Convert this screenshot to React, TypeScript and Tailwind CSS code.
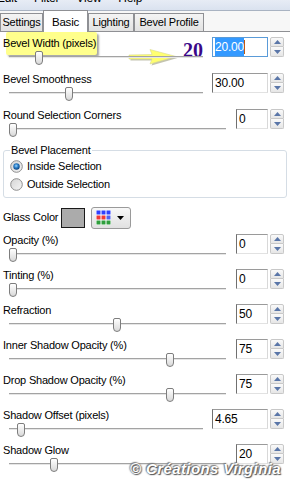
import React from "react";

function Thumb({ pos }: { pos: number }) {
  return (
    <div
      className="absolute top-px h-[14px] w-[8px] rounded-t-[2px] rounded-b-[4px] border border-[#7d7d7d] bg-gradient-to-b from-white to-[#d9d9d9]"
      style={{ left: pos }}
    />
  );
}

function Slider({ pos }: { pos: number }) {
  return (
    <div className="relative ml-[9px] h-[16px]">
      <div className="mt-[6px] h-[2px] border-t border-t-[#a3a3a3] border-b border-b-[#e6e6e6]" />
      <Thumb pos={pos} />
    </div>
  );
}

function Arrow({ up }: { up?: boolean }) {
  return (
    <svg width="7" height="4" viewBox="0 0 7 4">
      {up ? <path d="M0 4 L3.5 0 L7 4 Z" fill="#5a76a8" /> : <path d="M0 0 L3.5 4 L7 0 Z" fill="#5a76a8" />}
    </svg>
  );
}

function Spinner() {
  return (
    <div className="ml-[2px] flex h-[20px] w-[14px] flex-col">
      <div className="flex h-[10px] items-center justify-center rounded-t-[2px] border border-[#c8c8c8] bg-gradient-to-b from-[#fafafa] to-[#e6e6e6]">
        <Arrow up />
      </div>
      <div className="flex h-[10px] items-center justify-center rounded-b-[2px] border border-t-0 border-[#c8c8c8] bg-gradient-to-b from-[#fafafa] to-[#e6e6e6]">
        <Arrow />
      </div>
    </div>
  );
}

function ValueBox({ value, wide, focused }: { value: string; wide?: boolean; focused?: boolean }) {
  return (
    <div
      className={
        (wide ? "w-[56px] " : "w-[32px] ") +
        "h-[20px] pl-[2px] text-[12px] leading-[18px] text-black " +
        (focused
          ? "border border-[#5a9bd8] bg-white"
          : "border border-t-[#9a9a9a] border-l-[#707070] border-r-[#d8d8d8] border-b-[#e2e2e2] bg-white")
      }
    >
      {focused ? (
        <span className="inline-flex items-center">
          <span className="bg-[#3399ff] text-white">{value}</span>
          <span className="inline-block h-[14px] w-px bg-[#c05a10]" />
        </span>
      ) : (
        value
      )}
    </div>
  );
}

function Row({
  label,
  value,
  pos,
  wide,
  focused,
  tall,
}: {
  label: string;
  value: string;
  pos: number;
  wide?: boolean;
  focused?: boolean;
  tall?: boolean;
}) {
  return (
    <div className={"flex " + (tall ? "h-[36px]" : "h-[35px]")}>
      <div className={"flex flex-1 flex-col " + (wide ? "mr-[9px]" : "mr-[10px]")}>
        <div className="relative h-[17px] pl-[3px] pt-[3px] leading-[14px]">{label}</div>
        <Slider pos={pos} />
      </div>
      <div className="flex pr-[6px] pt-[4px]">
        <ValueBox value={value} wide={wide} focused={focused} />
        <Spinner />
      </div>
    </div>
  );
}

function Radio({ checked }: { checked?: boolean }) {
  return (
    <svg width="13" height="13" viewBox="0 0 13 13">
      <defs>
        <linearGradient id="rbg" x1="0" y1="0" x2="1" y2="1">
          <stop offset="0" stopColor="#d4d4d4" />
          <stop offset="1" stopColor="#f6f6f6" />
        </linearGradient>
        <radialGradient id="rdot" cx="0.45" cy="0.4" r="0.6">
          <stop offset="0" stopColor="#9fd6ff" />
          <stop offset="0.5" stopColor="#2a7fc8" />
          <stop offset="1" stopColor="#0b3f7a" />
        </radialGradient>
      </defs>
      <circle cx="6.5" cy="6.5" r="5.8" fill="url(#rbg)" stroke="#8c8c8c" strokeWidth="1" />
      {checked && <circle cx="6.5" cy="6.5" r="3.2" fill="url(#rdot)" />}
    </svg>
  );
}

export default function App() {
  return (
    <div className="relative h-[490px] w-[290px] overflow-hidden bg-white font-['Liberation_Sans',Arial,sans-serif] text-[11px] tracking-[-0.2px] text-black">
      {/* menu bar */}
      <div className="h-[11px] overflow-hidden border-b border-[#a9b3c2] bg-gradient-to-b from-[#e7ecf5] to-[#dae2ef]">
        <div className="-ml-[3px] -mt-[9px] flex gap-[17px] text-[12px] leading-[14px]">
          <span>Edit</span>
          <span>Filter</span>
          <span>View</span>
          <span>Help</span>
        </div>
      </div>
      {/* tabs */}
      <div className="flex h-[21px] items-end border-b border-[#8f9094] bg-[#f7f7f7]">
        <div className="flex h-[18px] w-[43px] items-center justify-center border border-b-0 border-[#8f9094] bg-gradient-to-b from-[#f4f4f4] to-[#e2e2e2]">
          Settings
        </div>
        <div className="relative z-10 -mb-px flex h-[22px] w-[45px] items-start justify-center border border-b-0 border-[#8f9094] bg-white pt-[3px] text-[11.5px]">
          Basic
        </div>
        <div className="flex h-[18px] w-[46px] items-center justify-center border border-b-0 border-[#8f9094] bg-gradient-to-b from-[#f4f4f4] to-[#e2e2e2]">
          Lighting
        </div>
        <div className="flex h-[18px] w-[70px] items-center justify-center border border-b-0 border-[#8f9094] bg-gradient-to-b from-[#f4f4f4] to-[#e2e2e2]">
          Bevel Profile
        </div>
      </div>

      {/* tooltip */}
      <div className="absolute left-[6px] top-[32px] h-[23px] w-[91px] rounded-[2px] bg-[#ffff8c] shadow-[2px_2px_2px_rgba(0,0,0,0.35)]" />
      {/* annotation 20 */}
      <div className="absolute left-[183px] top-[40px] font-['Liberation_Serif',serif] text-[20px] font-bold leading-[20px] tracking-normal text-[#3a0888]">
        20
      </div>
      {/* yellow arrow */}
      <svg className="absolute left-[126px] top-[48px]" width="54" height="18" viewBox="0 0 54 18">
        <path d="M3 7 L26 6.5 L24 1.5 L50 8.5 L24 16 L26 11 L3 11 Z" fill="#7a7a50" opacity="0.45" transform="translate(1.5,1.5)" />
        <path d="M3 7 L26 6.5 L24 1.5 L50 8.5 L24 16 L26 11 L3 11 Z" fill="#ffff70" stroke="#d8d890" strokeWidth="0.6" />
      </svg>

      <div className="pt-[1px]">
        <Row label="Bevel Width (pixels)" value="20.00" pos={26} wide focused tall />
        <Row label="Bevel Smoothness" value="30.00" pos={56} wide tall />
        <Row label="Round Selection Corners" value="0" pos={0} tall />
      </div>

      <fieldset className="mx-[3px] mt-[2px] h-[55px] rounded-[3px] border border-[#d5dde5] pl-[6px]">
        <legend className="px-[1px] leading-[14px]">Bevel Placement</legend>
        <div className="flex h-[18px] items-center gap-[4px] pt-[1px]">
          <Radio checked />
          <span>Inside Selection</span>
        </div>
        <div className="flex h-[18px] items-center gap-[4px] pt-[1px]">
          <Radio />
          <span>Outside Selection</span>
        </div>
      </fieldset>

      <div className="mt-[8px] flex h-[23px] items-center">
        <div className="w-[61px] pl-[3px]">Glass Color</div>
        <div className="h-[20px] w-[24px] border border-[#1a1a1a] bg-[#ababab]" />
        <div className="ml-[6px] flex h-[22px] w-[40px] items-center rounded-[3px] border border-[#9a9a9a] bg-gradient-to-b from-[#f8f8f8] to-[#e1e1e1] pl-[4px]">
          <svg width="15" height="15" viewBox="0 0 15 15">
            <rect x="0" y="0" width="15" height="15" fill="#ffffff" />
            <rect x="0.5" y="0.5" width="4" height="4" fill="#3040ff" />
            <rect x="5.5" y="0.5" width="4" height="4" fill="#3040ff" />
            <rect x="10.5" y="0.5" width="4" height="4" fill="#3040ff" />
            <rect x="0.5" y="5.5" width="4" height="4" fill="#f03838" />
            <rect x="5.5" y="5.5" width="4" height="4" fill="#f03838" />
            <rect x="10.5" y="5.5" width="4" height="4" fill="#5060f0" />
            <rect x="0.5" y="10.5" width="4" height="4" fill="#2e9e3c" />
            <rect x="5.5" y="10.5" width="4" height="4" fill="#2e9e3c" />
            <rect x="10.5" y="10.5" width="4" height="4" fill="#2e9e3c" />
          </svg>
          <svg className="ml-[6px]" width="7" height="4" viewBox="0 0 7 4">
            <path d="M0 0 L3.5 4 L7 0 Z" fill="#000" />
          </svg>
        </div>
      </div>

      <div className="pt-[1px]">
        <Row label="Opacity (%)" value="0" pos={0} />
        <Row label="Tinting (%)" value="0" pos={0} />
        <Row label="Refraction" value="50" pos={104} />
        <Row label="Inner Shadow Opacity (%)" value="75" pos={157} />
        <Row label="Drop Shadow Opacity (%)" value="75" pos={157} />
        <Row label="Shadow Offset (pixels)" value="4.65" pos={8} wide />
        <Row label="Shadow Glow" value="20" pos={41} />
      </div>

      {/* watermark */}
      <div className="absolute left-[130px] top-[461px] text-[15px] font-bold italic leading-[15px] tracking-[0.4px] text-white [text-shadow:0_0_2px_#555,1px_1px_1px_#555,-1px_-1px_1px_#888]">
        © Créations Virginia
      </div>
    </div>
  );
}
